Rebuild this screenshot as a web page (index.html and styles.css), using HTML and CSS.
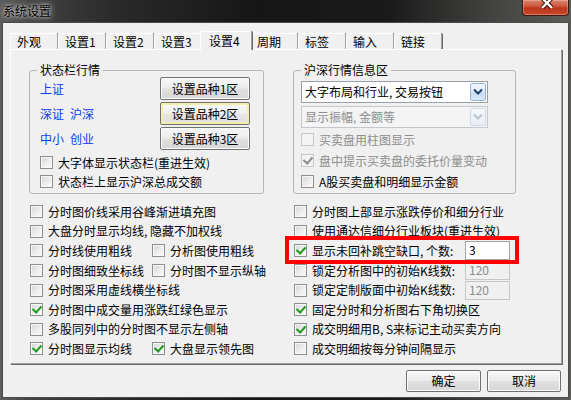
FILE: index.html
```html
<!DOCTYPE html>
<html lang="zh-CN">
<head>
<meta charset="utf-8">
<title>系统设置</title>
<link rel="stylesheet" href="styles.css">
</head>
<body>
<div class="window">
  <div class="titlebar">
    <span class="title">系统设置</span>
    <span class="close">
      <svg width="12" height="9" viewBox="0 0 12 9"><path d="M1 -2 L11 8 M11 -2 L1 8" stroke="#3b1208" stroke-width="4.4" fill="none"/><path d="M1 -2 L11 8 M11 -2 L1 8" stroke="#ffffff" stroke-width="2.4" fill="none"/></svg>
    </span>
  </div>
  <div class="client">
    <div class="tabs">
      <span class="tab">外观</span>
      <span class="tab">设置1</span>
      <span class="tab">设置2</span>
      <span class="tab">设置3</span>
      <span class="tab active">设置4</span>
      <span class="tab">周期</span>
      <span class="tab">标签</span>
      <span class="tab">输入</span>
      <span class="tab">链接</span>
    </div>
    <div class="panel">
      <div class="groups">
        <fieldset class="group g1">
          <legend>状态栏行情</legend>
          <div class="gbody">
            <div class="mrow"><span class="mlabel">上证</span><span class="btn">设置品种1区</span></div>
            <div class="mrow"><span class="mlabel">深证<span class="s2">沪深</span></span><span class="btn focus">设置品种2区</span></div>
            <div class="mrow"><span class="mlabel">中小<span class="s2">创业</span></span><span class="btn">设置品种3区</span></div>
            <div class="cbs">
              <div class="opt"><span class="box"></span><span class="txt">大字体显示状态栏(重进生效)</span></div>
              <div class="opt"><span class="box"></span><span class="txt">状态栏上显示沪深总成交额</span></div>
            </div>
          </div>
        </fieldset>
        <fieldset class="group g2">
          <legend>沪深行情信息区</legend>
          <div class="gbody">
            <div class="select"><span class="stext">大字布局和行业, 交易按钮</span><span class="dd"><svg width="14" height="16" viewBox="0 0 14 16"><path d="M3 5.5 L7 9.5 L11 5.5" fill="none" stroke="#1f3f6c" stroke-width="2"/></svg></span></div>
            <div class="select dis"><span class="stext">显示振幅, 金额等</span><span class="dd"><svg width="14" height="16" viewBox="0 0 14 16"><path d="M3 5.5 L7 9.5 L11 5.5" fill="none" stroke="#b7c2cf" stroke-width="2"/></svg></span></div>
            <div class="cbs">
              <div class="opt dis"><span class="box"></span><span class="txt">买卖盘用柱图显示</span></div>
              <div class="opt dis"><span class="box on"></span><span class="txt">盘中提示买卖盘的委托价量变动</span></div>
              <div class="opt"><span class="box"></span><span class="txt">A股买卖盘和明细显示金额</span></div>
            </div>
          </div>
        </fieldset>
      </div>
      <div class="options">
        <div class="col">
          <div class="opt"><span class="box"></span><span class="txt">分时图价线采用谷峰渐进填充图</span></div>
          <div class="opt"><span class="box"></span><span class="txt">大盘分时显示均线, 隐藏不加权线</span></div>
          <div class="pair">
            <div class="opt"><span class="box"></span><span class="txt">分时线使用粗线</span></div>
            <div class="opt"><span class="box"></span><span class="txt">分析图使用粗线</span></div>
          </div>
          <div class="pair">
            <div class="opt"><span class="box"></span><span class="txt">分时图细致坐标线</span></div>
            <div class="opt"><span class="box"></span><span class="txt">分时图不显示纵轴</span></div>
          </div>
          <div class="opt"><span class="box"></span><span class="txt">分时图采用虚线横坐标线</span></div>
          <div class="opt"><span class="box on"></span><span class="txt">分时图中成交量用涨跌红绿色显示</span></div>
          <div class="opt"><span class="box"></span><span class="txt">多股同列中的分时图不显示左侧轴</span></div>
          <div class="pair">
            <div class="opt"><span class="box on"></span><span class="txt">分时图显示均线</span></div>
            <div class="opt"><span class="box on"></span><span class="txt">大盘显示领先图</span></div>
          </div>
        </div>
        <div class="col">
          <div class="opt"><span class="box"></span><span class="txt">分时图上部显示涨跌停价和细分行业</span></div>
          <div class="opt"><span class="box"></span><span class="txt">使用通达信细分行业板块(重进生效)</span></div>
          <div class="opt hl"><span class="box on"></span><span class="txt lab">显示未回补跳空缺口, 个数:</span><span class="num">3</span><span class="redbox"></span></div>
          <div class="opt"><span class="box"></span><span class="txt lab">锁定分析图中的初始K线数:</span><span class="num off">120</span></div>
          <div class="opt"><span class="box"></span><span class="txt lab">锁定定制版面中初始K线数:</span><span class="num off">120</span></div>
          <div class="opt"><span class="box on"></span><span class="txt">固定分时和分析图右下角切换区</span></div>
          <div class="opt"><span class="box on"></span><span class="txt">成交明细用B, S来标记主动买卖方向</span></div>
          <div class="opt"><span class="box"></span><span class="txt">成交明细按每分钟间隔显示</span></div>
        </div>
      </div>
    </div>
    <div class="footer">
      <span class="btn ok">确定</span>
      <span class="btn cancel">取消</span>
    </div>
  </div>
</div>
</body>
</html>
```
FILE: styles.css
```css
* { box-sizing: border-box; }
html, body { margin: 0; padding: 0; }
body {
  width: 571px; height: 400px; overflow: hidden;
  font-family: "Noto Sans CJK SC", "Noto Sans", sans-serif;
  font-size: 12px; color: #000; background: #2a2a2a;
}
.window {
  width: 571px; height: 400px;
  display: flex; flex-direction: column;
  background: linear-gradient(90deg, #5e5e5e 0, #444 5%, #2a2a2a 20%, #161616 45%, #1a1a1a 68%, #3e3e3c 84%, #5c5c59 100%);
}
.titlebar { height: 22px; flex: none; display: flex; align-items: flex-start; }
.title {
  margin: 3px 0 0 3px; line-height: 15px; color: #000;
  text-shadow: 0 0 3px #d8d8d8, 0 0 6px #b4b4b4, 0 0 10px #8c8c8c;
}
.close {
  margin-left: auto; margin-right: 2px;
  width: 47px; height: 16px;
  display: flex; justify-content: center; align-items: flex-start;
  padding-left: 3px;
  border: 1px solid #3e1a12; border-top: none;
  border-radius: 0 0 4px 4px;
  background: linear-gradient(#d98470 0%, #cf5a3e 40%, #bd351c 55%, #c9492b 100%);
  box-shadow: inset 0 0 0 1px rgba(255, 220, 200, 0.35);
}
.close svg { display: block; }
.client {
  margin: 0 2px 2px; height: 376px; flex: none;
  border: 1px solid #4a4a4a; background: #f0f0f0;
  display: flex; flex-direction: column;
}
.tabs { height: 26px; flex: none; display: flex; align-items: flex-end; padding: 8px 0 0 7px; }
.tab {
  width: 48px; height: 16px; padding: 1px 0 0 6px; line-height: 14px;
  white-space: nowrap; background: #f0f0f0;
  border-top: 1px solid #fff; border-left: 1px solid #fff; border-right: 1px solid #a0a0a0;
  box-shadow: 1px 0 0 #696969;
  border-radius: 2px 2px 0 0;
}
.tab.active {
  width: 52px; height: 19px; margin: 0 -2px -1px; padding: 2px 0 0 8px;
  position: relative; z-index: 1;
}
.panel {
  margin-left: 7px; width: 552px; height: 315px; flex: none;
  border: 1px solid; border-color: #fff #a0a0a0 #a0a0a0 #fff;
  box-shadow: 1px 1px 0 #696969;
}
.groups { display: flex; gap: 29px; margin: 13px 0 0 18px; }
fieldset.group {
  margin: 0; padding: 0; min-width: 0;
  border: 1px solid #b5b5b5; border-radius: 3px;
}
legend { margin-left: 7px; padding: 0 3px; line-height: 14px; }
.g1 { width: 235px; }
.g2 { width: 223px; }
.gbody { height: 116px; }
.g1 .gbody { padding-left: 10px; }
.g2 .gbody { padding: 4px 0 0 7px; }
.mrow { display: flex; align-items: center; height: 23px; margin-bottom: 2px; }
.mlabel { width: 120px; color: #0a3cf5; line-height: 14px; }
.mlabel .s2 { margin-left: 6px; }
.btn {
  display: flex; justify-content: center; align-items: center;
  width: 90px; height: 23px; line-height: 14px;
  border: 1px solid #707070; border-radius: 2px;
  background: linear-gradient(#f6f6f6 0%, #ececec 48%, #e0e0e0 52%, #d6d6d6 100%);
  box-shadow: inset 0 0 0 1px #fbfbfb;
}
.btn.focus {
  background: linear-gradient(#fafafa 0%, #f0f0f0 48%, #e6e6e6 52%, #dedede 100%);
  box-shadow: inset 0 0 0 2px #f3eea8;
}
.g1 .cbs { margin-top: 3px; }
.g1 .opt { height: 19px; }
.g2 .cbs { margin-top: 1px; }
.g2 .opt { height: 21px; }
.select {
  display: flex; align-items: center;
  width: 187px; height: 22px; padding: 0 1px 0 3px;
  border: 1px solid #9aa0a8; background: #fff;
}
.select + .select { margin-top: 3px; }
.select.dis { border-color: #c4c8cd; background: #f4f4f4; color: #8d8d8d; }
.stext { line-height: 14px; white-space: nowrap; }
.dd {
  margin-left: auto; width: 16px; height: 18px;
  border: 1px solid #9ab7dd; border-radius: 2px;
  background: linear-gradient(#f1f6fd 0%, #dfeaf9 48%, #cadcf4 52%, #d9e7f9 100%);
}
.select.dis .dd { border-color: #cfd9e5; background: linear-gradient(#f6f8fb, #e9eef4); }
.dd svg { display: block; }
.options { display: grid; grid-template-columns: 264px 1fr; margin: 8px 0 0 19px; }
.col { display: flex; flex-direction: column; }
.opt { display: flex; align-items: center; height: 19.6px; white-space: nowrap; }
.pair { display: flex; height: 19.6px; }
.pair .opt { height: 19.6px; }
.pair .opt:first-child { width: 122px; }
.txt { line-height: 14px; }
.box {
  position: relative; flex: none;
  width: 13px; height: 13px; margin-right: 5px;
  border: 1px solid #8e8f8f;
  background: linear-gradient(135deg, #d6d6d6 0%, #ebebeb 50%, #fbfbfb 100%);
  box-shadow: inset 0 0 0 1px #f6f6f6;
}
.box.on::after {
  content: ""; position: absolute; left: 3px; top: 0px;
  width: 4px; height: 7px;
  border: solid #1f9a1f; border-width: 0 2px 2px 0;
  transform: rotate(42deg);
}
.opt.dis { color: #8d8d8d; }
.opt.dis .box { border-color: #c6c6c6; background: #f4f4f4; box-shadow: none; }
.opt.dis .box.on::after { border-color: #8c8c8c; }
.lab { width: 153px; }
.num {
  width: 45px; height: 19px; padding: 1px 0 0 3px; line-height: 14px;
  border: 1px solid #a2a2a2; background: #fff;
}
.num.off { border-color: #c6c6c6; background: #f0f0f0; color: #8d8d8d; }
.hl { position: relative; }
.redbox {
  position: absolute; left: -9px; top: -5px;
  width: 234px; height: 28px;
  border: 4px solid #ff0000;
}
.footer { display: flex; justify-content: flex-end; gap: 6px; padding: 6px 7px 0 0; }
.footer .btn { width: 74px; height: 22px; }
.footer .btn.ok { width: 75px; }
```
